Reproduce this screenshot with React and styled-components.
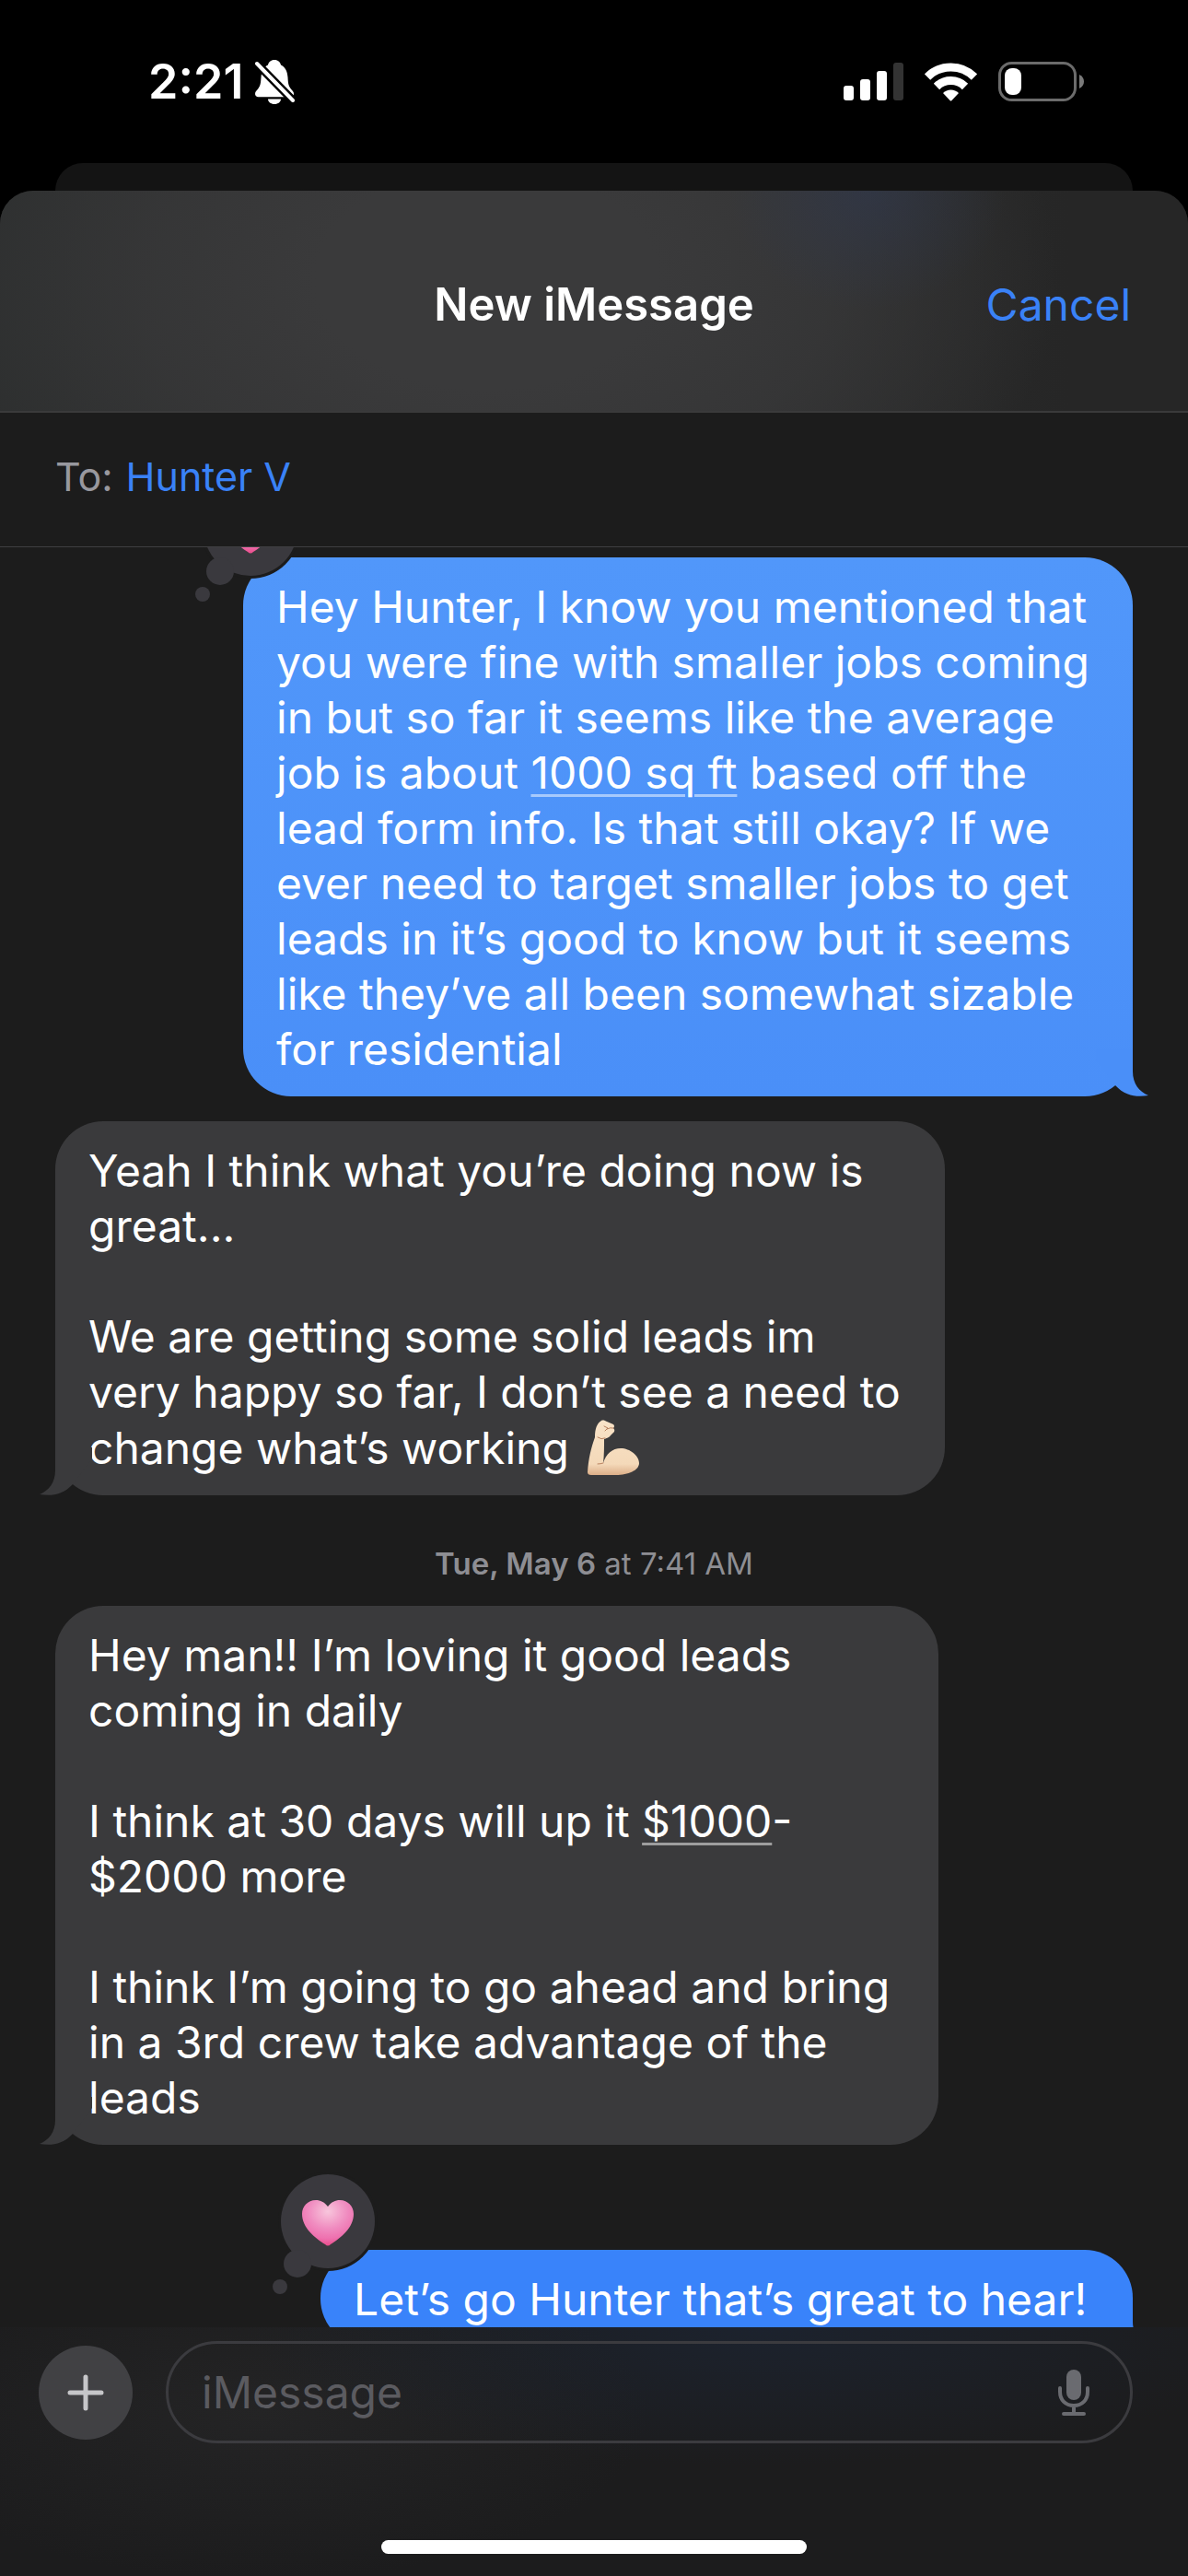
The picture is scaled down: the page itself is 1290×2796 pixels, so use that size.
import React, { useState } from "react";
import styled, { createGlobalStyle } from "styled-components";

const GlobalStyle = createGlobalStyle`
  * {
    box-sizing: border-box;
  }

  body {
    margin: 0;
    background: #000;
    font-family: Inter, "Liberation Sans", sans-serif;
    color: #fff;
  }

  button,
  input {
    font: inherit;
    border: 0;
    padding: 0;
    background: none;
  }
`;

const Screen = styled.div`
  display: flex;
  flex-direction: column;
  height: 100vh;
  overflow: hidden;
`;

const StatusBar = styled.header`
  display: flex;
  flex: none;
  align-items: center;
  justify-content: space-between;
  height: 177px;
  padding: 0 113px 0 161px;
`;

const StatusGroup = styled.div`
  display: flex;
  align-items: center;
  gap: ${({ $gap }) => $gap}px;
`;

const Clock = styled.time`
  font-size: 52px;
  font-weight: 600;
  line-height: 60px;
`;

const BackCard = styled.div`
  flex: none;
  height: 30px;
  margin: 0 60px;
  border-radius: 30px 30px 0 0;
  background: #141414;
`;

const Sheet = styled.main`
  display: flex;
  flex: 1;
  flex-direction: column;
  min-height: 0;
  border-radius: 36px 36px 0 0;
  background: #1c1c1c;
  overflow: hidden;
`;

const SheetHeader = styled.div`
  display: grid;
  flex: none;
  grid-template-columns: 1fr auto 1fr;
  align-items: center;
  height: 241px;
  padding: 9px 62px 0;
  border-bottom: 2px solid #3a3a3b;
  background:
    radial-gradient(ellipse 150px 130px at 73% 0%, rgba(48, 58, 84, 0.5), transparent),
    radial-gradient(ellipse 620px 400px at 41% 40%, #3a3a3b 30%, rgba(56, 56, 57, 0.8) 60%, transparent),
    linear-gradient(90deg, #2c2e2e, #2c2d2d 60%, #262626 90%);
`;

const Title = styled.h1`
  grid-column: 2;
  margin: 0;
  font-size: 49px;
  font-weight: 600;
  line-height: 60px;
`;

const CancelButton = styled.button`
  justify-self: end;
  color: #3a82f7;
  font-size: 48px;
  line-height: 60px;
  cursor: pointer;
`;

const RecipientRow = styled.div`
  display: flex;
  flex: none;
  align-items: center;
  gap: 14px;
  height: 146px;
  padding: 0 60px 7px;
  border-bottom: 1px solid #3f3f41;
  font-size: 43px;
  line-height: 60px;
`;

const RecipientLabel = styled.label`
  color: #98989e;
`;

const RecipientInput = styled.input`
  flex: 1;
  min-width: 0;
  color: #3a82f7;
  outline: none;
`;

const Thread = styled.section`
  display: flex;
  flex: 1;
  flex-direction: column;
  min-height: 0;
  padding: 11px 60px 0;
  overflow-y: auto;
  scrollbar-width: none;
`;

const Bubble = styled.div`
  position: relative;
  flex: none;
  align-self: ${({ $sent }) => ($sent ? "flex-end" : "flex-start")};
  min-width: ${({ $minWidth }) => $minWidth || 0}px;
  max-width: ${({ $maxWidth }) => $maxWidth || 966}px;
  margin-bottom: ${({ $gap }) => $gap || 27}px;
  padding: 24px 36px 21px;
  border-radius: 52px;
  background: ${({ $fill }) => $fill};
  font-size: 48px;
  line-height: 60px;
  white-space: pre-line;
`;

const TailSvg = styled.svg`
  position: absolute;
  bottom: 0;
  ${({ $sent }) => ($sent ? "right: -18px;" : "left: -18px; transform: scaleX(-1);")}
  width: 70px;
  height: 52px;
  fill: ${({ $color }) => $color};
`;

const ReactionSvg = styled.svg`
  position: absolute;
  top: -85px;
  left: -54px;
  width: 118px;
  height: 134px;
`;

const DetectedLink = styled.a`
  color: inherit;
  text-decoration: underline;
  text-decoration-color: rgba(255, 255, 255, 0.5);
  text-decoration-thickness: 3px;
  text-underline-offset: 6px;
`;

const MuscleSvg = styled.svg`
  width: 58px;
  height: 60px;
  margin-left: 6px;
  vertical-align: -12px;
`;

const Timestamp = styled.p`
  margin: 27px 0 26px;
  color: #8e8e93;
  font-size: 33px;
  line-height: 40px;
  text-align: center;

  strong {
    font-weight: 600;
  }
`;

const Composer = styled.form`
  display: flex;
  flex: none;
  flex-direction: column;
  justify-content: space-between;
  height: 270px;
  padding: 15px 0 24px;
  background:
    radial-gradient(ellipse 560px 150px at 64% 0%, rgba(28, 36, 50, 0.8), transparent),
    radial-gradient(ellipse 420px 180px at 22% 35%, #242425, transparent),
    #1c1c1d;
`;

const ComposerRow = styled.div`
  display: flex;
  align-items: center;
  gap: 36px;
  padding: 0 60px 0 42px;
`;

const AddButton = styled.button`
  display: grid;
  place-items: center;
  width: 102px;
  height: 102px;
  border-radius: 50%;
  background: #414144;
  cursor: pointer;
`;

const Field = styled.div`
  display: flex;
  flex: 1;
  align-items: center;
  height: 111px;
  padding: 0 43px 0 36px;
  border: 3px solid #3b3b3f;
  border-radius: 56px;
`;

const MessageInput = styled.input`
  flex: 1;
  min-width: 0;
  color: #fff;
  font-size: 48px;
  line-height: 60px;
  outline: none;

  &::placeholder {
    color: #5b5b60;
    opacity: 1;
  }
`;

const MicButton = styled.button`
  display: grid;
  cursor: pointer;
`;

const HomeIndicator = styled.div`
  align-self: center;
  width: 462px;
  height: 15px;
  border-radius: 8px;
  background: #fff;
`;

function SilentBell() {
  return (
    <svg width="44" height="48" viewBox="0 0 44 48" aria-label="Silent mode">
      <path
        fill="#fff"
        d="M22 0c-4 0-6.500 2.500-7 5.500C10 8 8 12.500 7.500 19c-.3 6-.8 9-3 12C2.500 33.500 1 34.500 1 37c0 2 1.500 3.200 3.500 3.200h35c2 0 3.500-1.200 3.500-3.200 0-2.500-1.500-3.500-3.500-6-2.200-3-2.700-6-3-12C36 12.500 34 8 29 5.500 28.500 2.500 26 0 22 0z"
      />
      <path fill="#fff" d="M15 42.500h14c0 3-3 5.500-7 5.500s-7-2.500-7-5.500z" />
      <path stroke="#000" strokeWidth="9" d="M-1 0 L46 48" />
      <path stroke="#fff" strokeWidth="4" strokeLinecap="round" d="M3 4 L42 44" />
    </svg>
  );
}

function Signal() {
  return (
    <svg width="65" height="41" viewBox="0 0 65 41" aria-label="Signal strength">
      <rect x="0" y="25" width="11" height="16" rx="3" fill="#fff" />
      <rect x="18" y="18" width="11" height="23" rx="3" fill="#fff" />
      <rect x="36" y="9" width="11" height="32" rx="3" fill="#fff" />
      <rect x="54" y="0" width="11" height="41" rx="3" fill="#333" />
    </svg>
  );
}

function Wifi() {
  return (
    <svg width="57" height="42" viewBox="0 0 57 42" aria-label="Wi-Fi">
      <g fill="none" stroke="#fff" strokeWidth="9">
        <path d="M3 15.500a36 36 0 0 1 51 0" />
        <path d="M13 26a22 22 0 0 1 31 0" />
      </g>
      <path fill="#fff" d="M20 33a12 12 0 0 1 17 0L29.500 41q-1 1-2 0z" />
    </svg>
  );
}

function Battery() {
  return (
    <svg width="93" height="43" viewBox="0 0 93 43" aria-label="Battery">
      <rect x="1.500" y="1.500" width="82" height="40" rx="13" fill="none" stroke="#6b6b6b" strokeWidth="3" />
      <path fill="#7a7a7a" d="M88 14c3 1.500 5 4 5 7.500s-2 6-5 7.500z" />
      <rect x="7" y="7" width="18" height="29" rx="8" fill="#fff" />
    </svg>
  );
}

function Tail({ sent, color }) {
  return (
    <TailSvg viewBox="-52 -52 70 52" $sent={sent} $color={color} aria-hidden="true">
      <path d="M0 -52V-27C0 -14 7 -5 17 -1C5 1 -8 0 -19 -12L-40 -40V-52Z" />
    </TailSvg>
  );
}

function HeartReaction() {
  return (
    <ReactionSvg viewBox="-54 -85 118 134" role="img" aria-label="Loved">
      <defs>
        <radialGradient id="heartFill" cx="0.5" cy="0.25" r="0.75">
          <stop offset="0" stopColor="#f8c6dc" />
          <stop offset="0.5" stopColor="#f08cc0" />
          <stop offset="0.8" stopColor="#ee70ae" />
          <stop offset="1" stopColor="#ea4c8a" />
        </radialGradient>
      </defs>
      <circle cx="8" cy="-31" r="54" fill="#1c1c1c" />
      <g fill="#3a393e">
        <circle cx="8" cy="-31" r="51" />
        <circle cx="-25" cy="15" r="15" />
        <circle cx="-44" cy="40" r="8" />
      </g>
      <path
        fill="url(#heartFill)"
        d="M8 -47C4 -52 0 -54 -5 -54C-14 -54 -20 -47 -20 -39C-20 -24 -6 -13 5 -6Q8 -3 11 -6C22 -13 36 -24 36 -39C36 -47 30 -54 21 -54C16 -54 12 -52 8 -47Z"
      />
    </ReactionSvg>
  );
}

function FlexedArm() {
  return (
    <MuscleSvg viewBox="0 0 58 60" role="img" aria-label="💪🏻">
      <defs>
        <linearGradient id="skin" x1="0" y1="0" x2="0" y2="1">
          <stop offset="0" stopColor="#f9e3c8" />
          <stop offset="0.8" stopColor="#f4d9b9" />
          <stop offset="1" stopColor="#dcae88" />
        </linearGradient>
      </defs>
      <path
        fill="url(#skin)"
        d="M16 1C18 0 20 1 22 2L29 5Q31 7 29 9Q31 11 30 13L26 17C24 20 21 20 19 21C19 30 19 38 18 47C21 37 28 31 37 31C47 31 57 39 57 47C57 55 45 60 32 60H5Q1 60 1 57C2 42 5 30 9 19C9 10 11 4 16 1Z"
      />
      <path
        fill="none"
        stroke="#b98260"
        strokeWidth="1"
        strokeLinecap="round"
        d="M19 7l4 2-3 3M22 10q4-2 7-1M12 19q4 3 8 1M18 47q-3 1-6 1"
      />
    </MuscleSvg>
  );
}

function PlusIcon() {
  return (
    <svg width="40" height="40" viewBox="0 0 40 40" aria-hidden="true">
      <path stroke="#c6c6c9" strokeWidth="5" strokeLinecap="round" d="M20 3V37M3 20H37" />
    </svg>
  );
}

function MicIcon() {
  return (
    <svg width="36" height="52" viewBox="0 0 36 52" fill="none" stroke="#6a6b70" strokeLinecap="round">
      <rect x="10" y="1" width="16" height="33" rx="8" fill="#6a6b70" stroke="none" />
      <path strokeWidth="4" d="M3 21V25C3 34 9 40 18 40S33 34 33 25V21M18 40V48M7 49H29" />
    </svg>
  );
}

const SENT_LIGHT = "linear-gradient(#5197fa, #4a8ff8)";
const RECEIVED = "#3a3a3c";

function App() {
  const [draft, setDraft] = useState("");
  const [recipient, setRecipient] = useState("Hunter V");

  return (
    <>
      <GlobalStyle />
      <Screen>
        <StatusBar>
          <StatusGroup $gap={12}>
            <Clock>2:21</Clock>
            <SilentBell />
          </StatusGroup>
          <StatusGroup $gap={23}>
            <Signal />
            <Wifi />
            <Battery />
          </StatusGroup>
        </StatusBar>
        <BackCard />
        <Sheet>
          <SheetHeader>
            <Title>New iMessage</Title>
            <CancelButton type="button">Cancel</CancelButton>
          </SheetHeader>
          <RecipientRow>
            <RecipientLabel htmlFor="recipient">To:</RecipientLabel>
            <RecipientInput
              id="recipient"
              value={recipient}
              onChange={(e) => setRecipient(e.target.value)}
            />
          </RecipientRow>

          <Thread>
            <Bubble $sent $fill={SENT_LIGHT}>
              Hey Hunter, I know you mentioned that you were fine with smaller
              jobs coming in but so far it seems like the average job is about{" "}
              <DetectedLink href="#area">1000 sq ft</DetectedLink> based off the
              lead form info. Is that still okay? If we ever need to target
              smaller jobs to get leads in it’s good to know but it seems like
              they’ve all been somewhat sizable for residential
              <Tail sent color="#4a8ff8" />
              <HeartReaction />
            </Bubble>
            <Bubble $fill={RECEIVED}>
              {"Yeah I think what you’re doing now is great...\n\nWe are getting some solid leads im very happy so far, I don’t see a need to change what’s working "}
              <FlexedArm />
              <Tail color={RECEIVED} />
            </Bubble>
            <Timestamp>
              <strong>Tue, May 6</strong> at 7:41 AM
            </Timestamp>
            <Bubble $fill={RECEIVED} $gap={114} $maxWidth={959}>
              {"Hey man!! I’m loving it good leads coming in daily\n\nI think at 30 days will up it "}
              <DetectedLink href="#amount">$1000</DetectedLink>
              {"-\n$2000 more\n\nI think I’m going to go ahead and bring in a 3rd crew take advantage of the leads"}
              <Tail color={RECEIVED} />
            </Bubble>
            <Bubble $sent $fill="#3983fa" $minWidth={882}>
              Let’s go Hunter that’s great to hear!
              <Tail sent color="#3983fa" />
              <HeartReaction />
            </Bubble>
          </Thread>

          <Composer onSubmit={(e) => e.preventDefault()}>
            <ComposerRow>
              <AddButton type="button" aria-label="Add attachment">
                <PlusIcon />
              </AddButton>
              <Field>
                <MessageInput
                  aria-label="Message"
                  placeholder="iMessage"
                  value={draft}
                  onChange={(e) => setDraft(e.target.value)}
                />
                <MicButton type="button" aria-label="Dictate">
                  <MicIcon />
                </MicButton>
              </Field>
            </ComposerRow>
            <HomeIndicator />
          </Composer>
        </Sheet>
      </Screen>
    </>
  );
}

export default App;
